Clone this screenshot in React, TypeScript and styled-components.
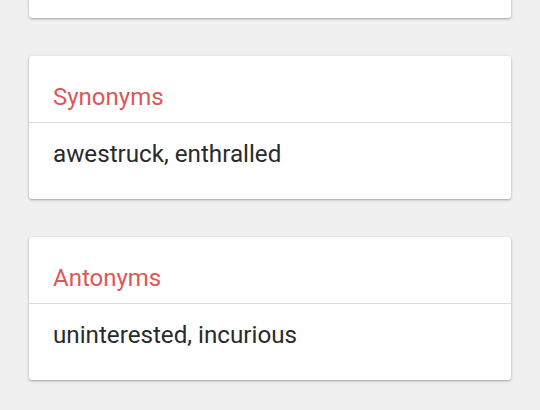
import React from "react";
import styled, { createGlobalStyle } from "styled-components";

const Global = createGlobalStyle`
  html, body { margin: 0; padding: 0; background: #f0f0f0; }
  body { font-family: Roboto, "Noto Sans", sans-serif; overflow: hidden; }
`;

const Page = styled.div`
  width: 540px;
  height: 410px;
  overflow: hidden;
  display: flex;
  flex-direction: column;
  gap: 38px;
  padding: 0 29px;
  box-sizing: border-box;
`;

const Card = styled.div<{ $cut?: boolean }>`
  background: #fff;
  border-radius: 3px;
  box-shadow: 0 1px 3px rgba(0, 0, 0, 0.28), 0 1px 1px rgba(0, 0, 0, 0.08);
  display: flex;
  flex-direction: column;
  flex-shrink: 0;
  ${(p) => (p.$cut ? "margin-top: -80px; height: 98px;" : "")}
`;

const Header = styled.div`
  height: 67px;
  box-sizing: border-box;
  padding: 0 24px 11px;
  display: flex;
  align-items: flex-end;
  border-bottom: 1px solid #dcdcdc;
  color: #e05656;
  font-size: 24px;
`;

const Body = styled.div`
  height: 76px;
  box-sizing: border-box;
  padding: 0 24px 15px;
  display: flex;
  align-items: center;
  color: #2a2a2a;
  font-size: 24.2px;
`;

const Section = ({ title, words }: { title: string; words: string }) => (
  <Card>
    <Header>{title}</Header>
    <Body>{words}</Body>
  </Card>
);

export default function App() {
  return (
    <>
      <Global />
      <Page>
        <Card $cut />
        <Section title="Synonyms" words="awestruck, enthralled" />
        <Section title="Antonyms" words="uninterested, incurious" />
      </Page>
    </>
  );
}
